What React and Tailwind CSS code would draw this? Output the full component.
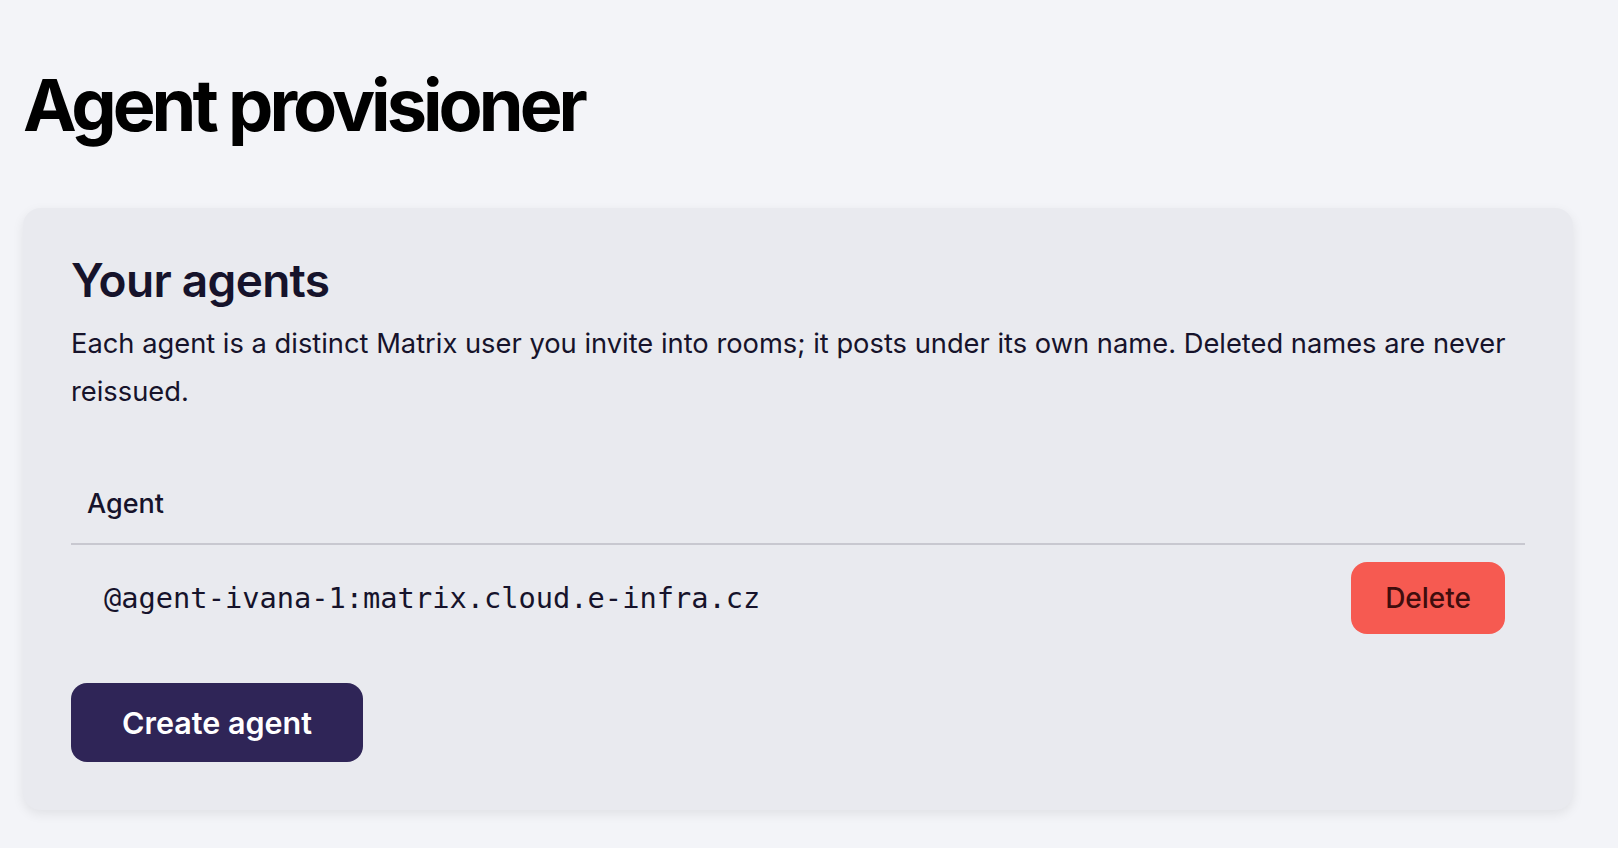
import React from 'react';

const agents = ['@agent-ivana-1:matrix.cloud.e-infra.cz'];

const App = () => {
    return (
        <div className="min-h-screen bg-[#f3f4f8] pl-[23px] pt-[69px] font-['Inter',sans-serif] text-[#16132b]">
            <h1 className="text-[72px] font-bold leading-none tracking-[-0.055em] text-black">
                Agent provisioner
            </h1>
            <section className="mt-[67px] w-[1550px] rounded-[18px] bg-[#e9eaef] px-12 pb-12 pt-12 shadow-[0_4px_12px_rgba(0,0,0,0.08)]">
                <h2 className="text-[46px] font-semibold leading-[48px] tracking-[-0.015em]">Your agents</h2>
                <p className="mt-4 text-[27.3px] leading-[48px]">
                    Each agent is a distinct Matrix user you invite into rooms; it posts under its own name.
                    Deleted names are never reissued.
                </p>
                <table className="mt-[54px] w-full border-collapse">
                    <thead>
                        <tr className="border-b-2 border-[#c8c8d0]">
                            <th className="px-4 pb-[21px] pt-4 text-left text-[27px] font-medium leading-[36px]">Agent</th>
                            <th className="py-4"></th>
                        </tr>
                    </thead>
                    <tbody>
                        {agents.map((agent) => (
                            <tr key={agent}>
                                <td className="py-[17px] pl-[33px] font-['DejaVu_Sans_Mono',monospace] text-[28.7px] leading-[40px]">
                                    {agent}
                                </td>
                                <td className="py-[17px] pr-5 text-right">
                                    <button className="rounded-[16px] bg-[#f65a51] px-[34px] py-4 text-[28px] font-medium leading-[40px] text-[#3f0d0d]">
                                        Delete
                                    </button>
                                </td>
                            </tr>
                        ))}
                    </tbody>
                </table>
                <button className="mt-8 rounded-[16px] bg-[#2f2557] px-[51px] py-[17px] text-[30.5px] font-semibold leading-[45px] text-white">
                    Create agent
                </button>
            </section>
        </div>
    );
};

export default App;
